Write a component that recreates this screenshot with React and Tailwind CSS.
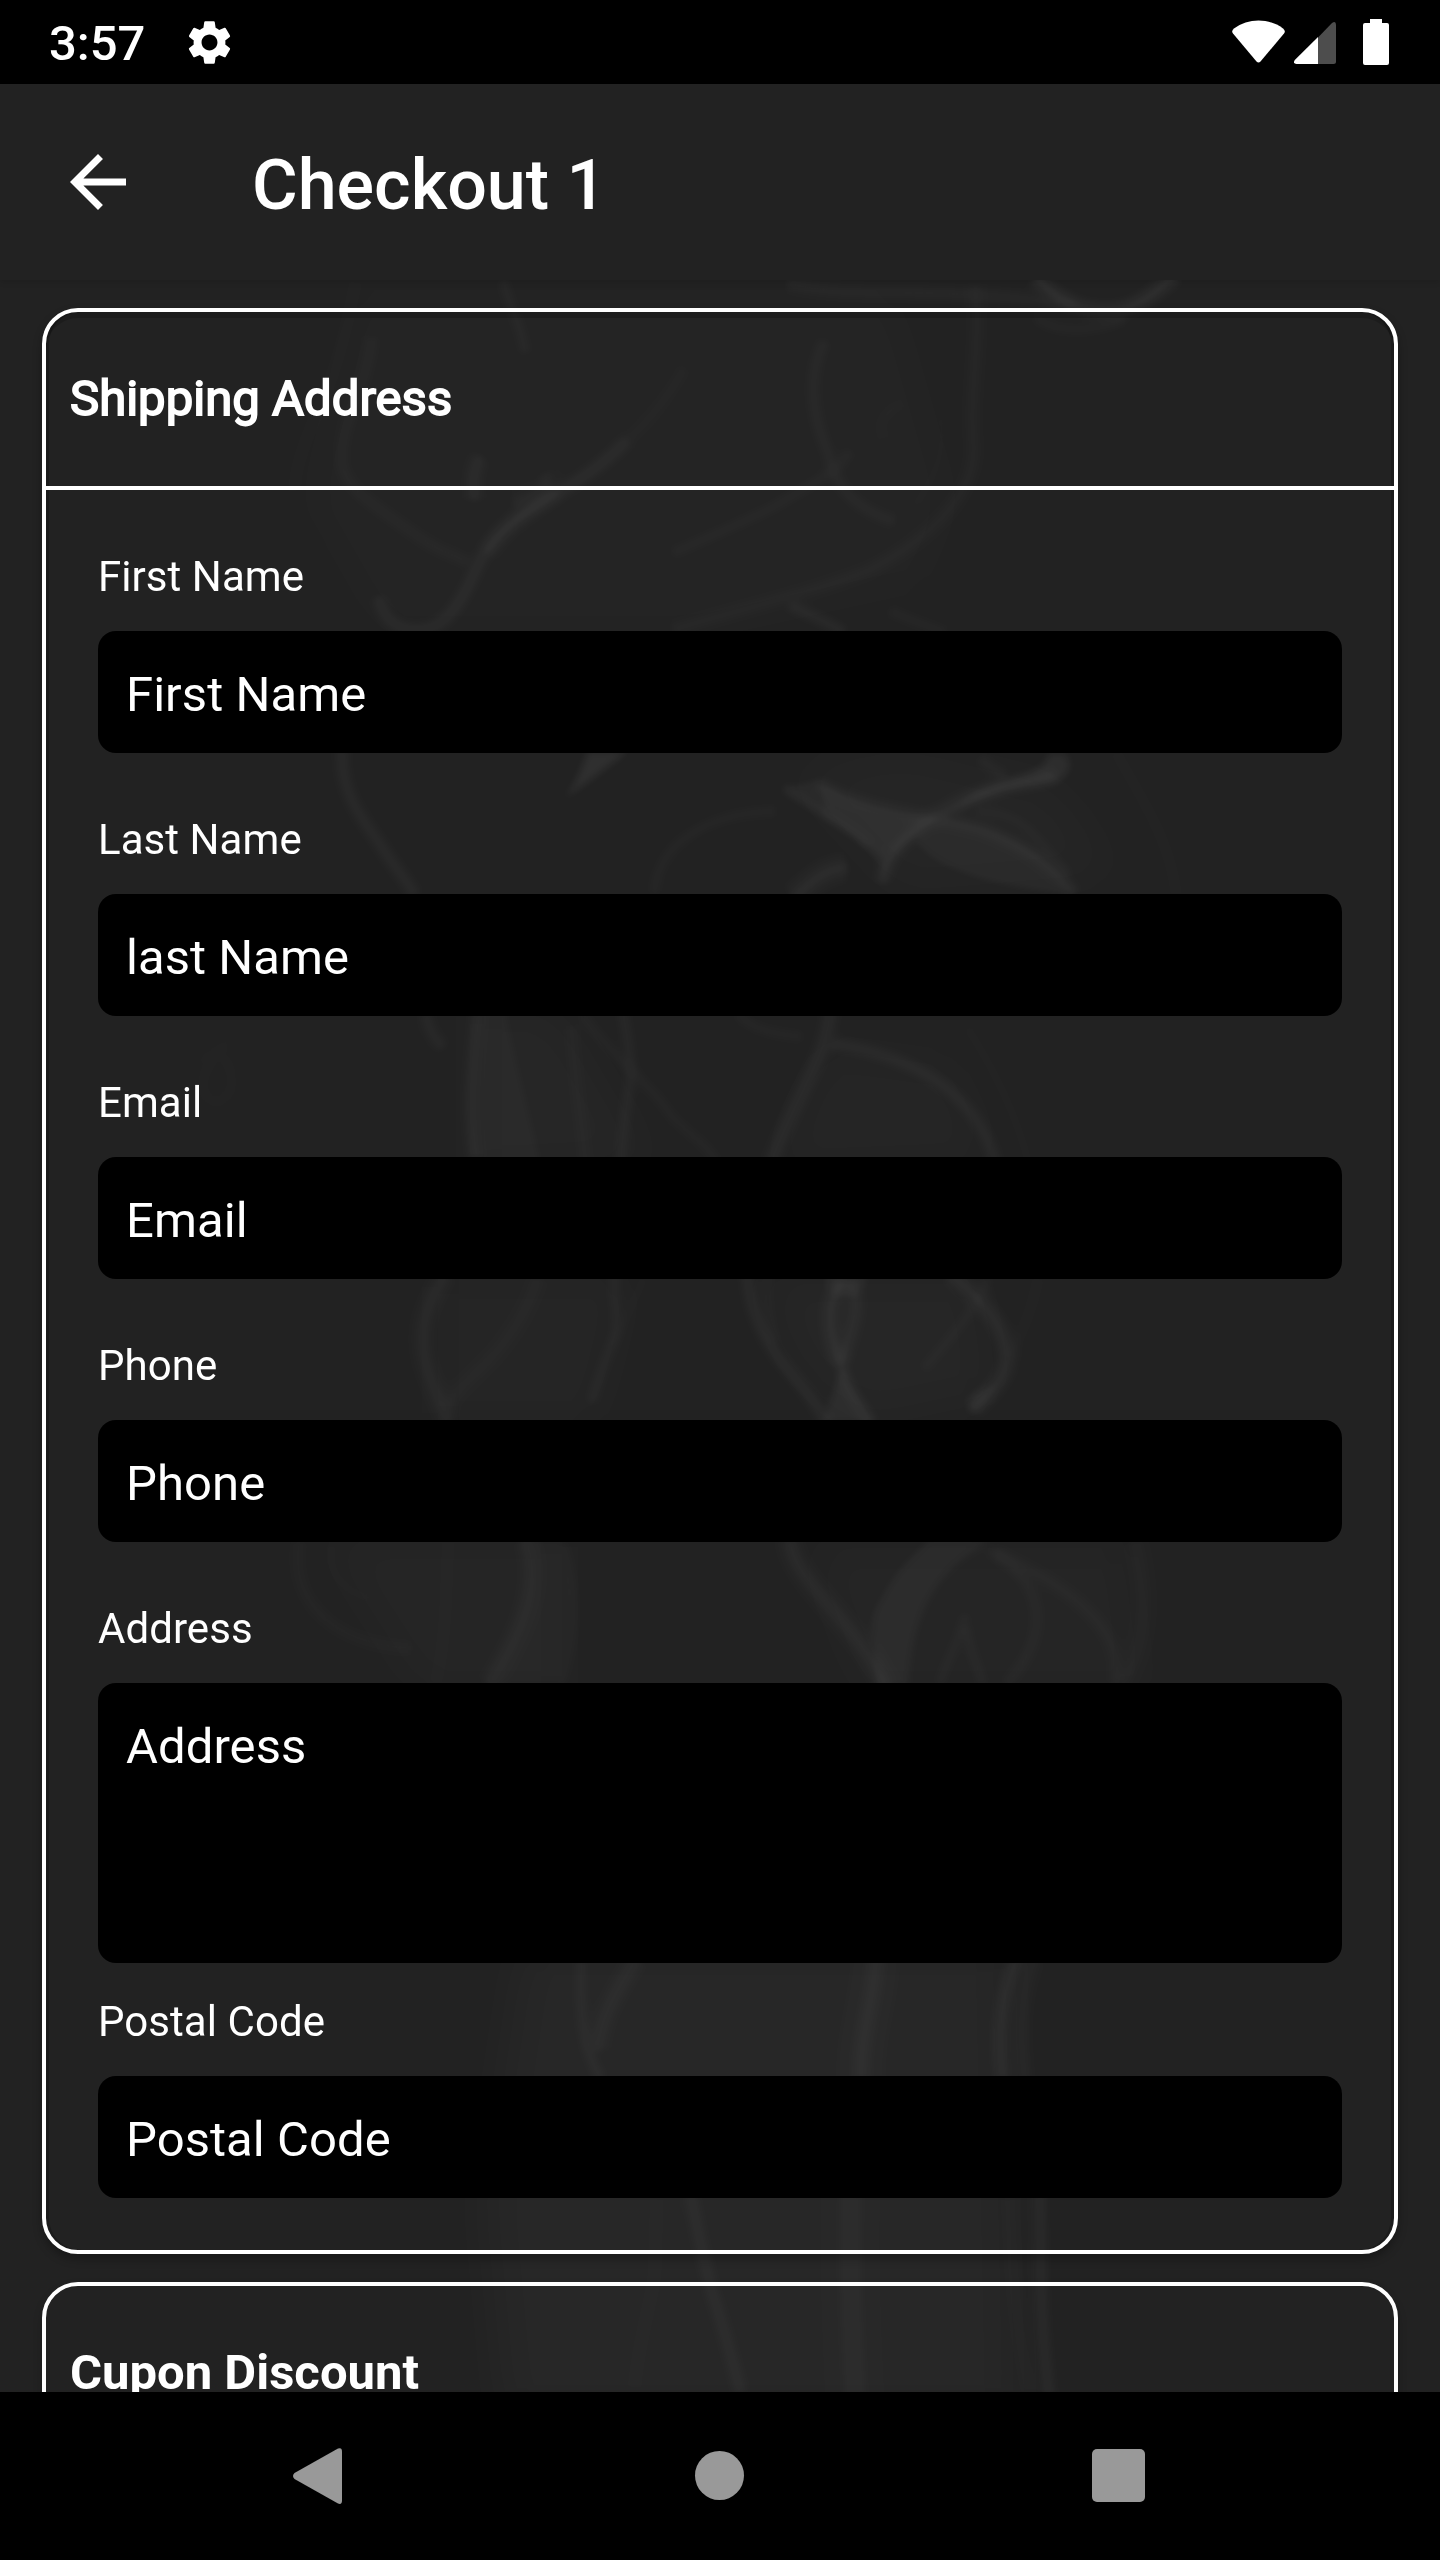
import React from "react";
import { MdSettings, MdArrowBack } from "react-icons/md";

const fields = [
  { label: "First Name", placeholder: "First Name" },
  { label: "Last Name", placeholder: "last Name" },
  { label: "Email", placeholder: "Email" },
  { label: "Phone", placeholder: "Phone" },
  { label: "Address", placeholder: "Address", multiline: true },
  { label: "Postal Code", placeholder: "Postal Code", tight: true },
];

// A strand of smoke: a thin core inside a wider, fainter glow.
function Wisp({ d, w = 5, o = 0.04 }) {
  return (
    <g fill="none" stroke="#fff">
      <path d={d} strokeWidth={w * 3.6} strokeOpacity={o * 0.28} vectorEffect="non-scaling-stroke" />
      <path d={d} strokeWidth={w * 1.1} strokeOpacity={o * 0.75} vectorEffect="non-scaling-stroke" />
    </g>
  );
}

function Haze({ d, o = 0.02 }) {
  return <path d={d} fill="#fff" fillOpacity={o} />;
}

function Smoke() {
  return (
    <svg className="pointer-events-none absolute inset-0 h-full w-full" viewBox="0 280 1440 2112" aria-hidden="true">
      <defs>
        <filter id="soft" filterUnits="userSpaceOnUse" x="0" y="200" width="1440" height="2300" colorInterpolationFilters="sRGB">
          <feGaussianBlur stdDeviation="3.5" />
        </filter>
        <filter id="wide" filterUnits="userSpaceOnUse" x="0" y="200" width="1440" height="2300" colorInterpolationFilters="sRGB">
          <feGaussianBlur stdDeviation="26" />
        </filter>
      </defs>

      <g filter="url(#wide)">
        <Haze d="M350 290 L900 290 L960 500 L930 590 L700 640 L380 640 L300 500 Z" o={0.012} />
        <Haze d="M780 770 L900 740 L1060 780 L1130 880 L900 900 Z" o={0.014} />
        <Haze d="M470 1000 L560 1000 L660 1170 L470 1180 Z" o={0.018} />
        <Haze d="M820 1040 L960 1060 L1000 1170 L760 1180 Z" o={0.016} />
        <Haze d="M430 1270 L640 1270 L600 1430 L430 1430 Z" o={0.016} />
        <Haze d="M750 1270 L980 1270 L1000 1400 L860 1430 L790 1370 Z" o={0.018} />
        <Haze d="M310 1530 L570 1530 L570 1700 L420 1700 Z" o={0.014} />
        <Haze d="M800 1540 L1130 1540 L1150 1700 L860 1700 Z" o={0.016} />
        <Haze d="M520 1940 L1010 1940 L1020 2420 L500 2420 L480 2200 Z" o={0.022} />
      </g>

      <g filter="url(#soft)">
        <g transform="translate(200 260) scale(0.6378 0.3333)">
          <Wisp d="M245 60 C230 200 215 320 190 430 C165 540 145 640 150 700" w={12} o={0.01} />
          <Wisp d="M270 230 C260 400 220 480 222 600 C225 680 260 720 350 840 C380 880 410 890 420 910" w={6} o={0.026} />
          <Wisp d="M475 60 C485 140 505 200 510 280" w={5} o={0.03} />
          <Wisp d="M440 590 C425 640 430 670 430 720" w={7} o={0.04} />
          <Wisp d="M760 320 C740 400 700 490 670 540" w={10} o={0.014} />
          <Wisp d="M670 540 C620 640 560 700 510 760 C450 830 440 900 420 980 C400 1050 380 1110 340 1110 C300 1110 285 1060 280 1010" w={6} o={0.046} />
          <Wisp d="M560 690 C500 770 470 820 450 880" w={8} o={0.035} />
          <Wisp d="M540 640 C550 680 530 710 490 730" w={10} o={0.024} />
          <Wisp d="M980 240 C955 330 955 450 985 580 C995 680 1030 750 1090 785" w={6} o={0.03} />
          <Wisp d="M1020 570 C1000 640 960 670 900 740 C860 780 800 830 740 880" w={5} o={0.026} />
          <Wisp d="M1215 80 C1225 250 1205 400 1213 560 C1215 700 1150 830 1050 930 C960 1000 860 1040 740 1110" w={7} o={0.028} />
          <Wisp d="M1105 430 C1070 450 1060 500 1075 540" w={7} o={0.014} />
          <Wisp d="M1160 470 C1170 560 1155 650 1120 740" w={6} o={0.012} />
          <Wisp d="M920 70 C1000 110 1100 90 1210 105 C1290 115 1330 125 1370 140" w={7} o={0.032} />
          <Wisp d="M1310 50 C1350 140 1400 160 1440 150 C1480 135 1500 90 1530 45" w={6} o={0.07} />
          <Wisp d="M1310 170 C1340 220 1400 220 1450 175" w={5} o={0.024} />
          <Wisp d="M925 1035 C960 1070 990 1090 1010 1120" w={5} o={0.04} />
          <Wisp d="M1080 1050 C1110 1080 1140 1095 1170 1120" w={5} o={0.024} />
        </g>

        <g transform="translate(200 740) scale(0.6631 0.4464)">
          <Wisp d="M215 20 C210 110 240 170 270 230 C290 280 310 310 325 350" w={6} o={0.042} />
          <Haze d="M585 25 L645 25 C610 65 590 90 550 130 C570 90 575 60 585 25 Z" o={0.06} />
          <Wisp d="M870 160 C780 160 690 220 685 345" w={5} o={0.026} />
          <Haze d="M880 110 C930 160 1000 220 1025 275 C1030 290 1025 310 1030 325 C1035 290 1050 240 1080 215 C1085 270 1180 330 1320 345 C1290 270 1220 190 1110 175 C1030 165 970 130 930 90 Z" o={0.03} />
          <Haze d="M940 100 C970 140 1040 165 1110 175 L1040 260 L1020 260 C1000 215 960 190 940 175 Z" o={0.025} />
          <Wisp d="M880 105 C920 150 980 190 1010 235" w={5} o={0.034} />
          <Wisp d="M930 95 C1000 160 1100 165 1180 200 C1250 240 1290 290 1320 345" w={6} o={0.036} />
          <Wisp d="M1030 320 C1030 250 1090 180 1150 135 C1200 100 1260 100 1290 75" w={7} o={0.044} />
          <Haze d="M1150 140 C1190 80 1270 95 1280 30 L1305 30 C1320 60 1310 100 1260 100 C1210 105 1180 130 1110 180 Z" o={0.05} />
          <Wisp d="M1170 160 C1250 160 1260 230 1310 300" w={5} o={0.024} />
          <Wisp d="M1175 40 C1190 60 1200 70 1215 80" w={6} o={0.03} />
          <Wisp d="M1380 25 C1420 130 1465 230 1472 350" w={7} o={0.014} />
          <Wisp d="M975 285 C940 290 920 320 895 355" w={9} o={0.05} />
          <Wisp d="M40 690 C-10 740 0 820 30 810 C55 790 50 740 35 710" w={6} o={0.016} />
          <Wisp d="M-20 780 C-10 680 80 640 190 650" w={5} o={0.012} />
          <Wisp d="M340 610 C345 655 355 670 368 690" w={7} o={0.035} />
          <Wisp d="M418 610 C415 700 400 800 415 940" w={6} o={0.044} />
          <Haze d="M418 600 L460 600 C480 740 500 850 515 950 L415 950 C400 800 415 700 418 600 Z" o={0.018} />
          <Wisp d="M560 640 C565 750 575 850 582 950" w={6} o={0.022} />
          <Wisp d="M637 600 C645 680 655 740 645 800 C640 860 635 900 635 950" w={6} o={0.034} />
          <Wisp d="M575 610 C620 710 680 770 710 840 C740 890 770 910 780 950" w={5} o={0.024} />
          <Wisp d="M810 610 C830 650 870 660 910 665" w={5} o={0.025} />
          <Wisp d="M950 600 C950 700 900 790 860 950" w={7} o={0.048} />
          <Wisp d="M950 680 C1050 700 1170 770 1200 950" w={6} o={0.042} />
          <Wisp d="M1155 640 C1190 720 1230 830 1250 950" w={8} o={0.012} />
        </g>

        <g transform="translate(200 1260) scale(0.6631 0.3333)">
          <Wisp d="M370 40 C350 110 320 200 345 340 C355 400 365 440 375 490" w={8} o={0.036} />
          <Wisp d="M510 50 C490 180 450 280 410 350 C390 390 375 420 370 450" w={8} o={0.022} />
          <Wisp d="M625 40 C620 120 640 180 620 260 C605 330 600 360 590 430" w={6} o={0.03} />
          <Wisp d="M670 50 C655 130 635 200 620 260" w={5} o={0.018} />
          <Wisp d="M825 40 C830 160 850 230 875 300 C905 370 930 430 945 490" w={6} o={0.046} />
          <Wisp d="M858 40 C850 120 860 180 865 250" w={5} o={0.022} />
          <Wisp d="M970 60 C940 130 950 230 965 310" w={7} o={0.055} />
          <Wisp d="M980 60 C1000 130 980 220 968 300" w={7} o={0.045} />
          <Haze d="M940 40 L1010 40 L990 110 L955 110 Z" o={0.03} />
          <Wisp d="M967 300 C970 370 990 420 1014 490" w={5} o={0.05} />
          <Haze d="M967 320 C960 380 945 440 940 490 L1014 490 C990 420 975 370 967 320 Z" o={0.045} />
          <Wisp d="M1130 40 C1180 120 1215 200 1218 290 C1215 360 1190 400 1165 450" w={7} o={0.052} />
          <Haze d="M1200 370 C1180 390 1150 400 1160 460 L1185 430 Z" o={0.035} />
          <Wisp d="M1190 50 C1170 150 1130 240 1090 330" w={5} o={0.024} />
          <Wisp d="M1265 50 C1255 140 1245 200 1220 290" w={7} o={0.014} />
          <Wisp d="M150 840 C135 990 180 1150 320 1165" w={10} o={0.02} />
          <Wisp d="M200 850 C190 930 210 990 260 1020" w={8} o={0.01} />
          <Wisp d="M375 840 C370 960 375 1100 355 1275" w={8} o={0.018} />
          <Wisp d="M490 835 C515 960 490 1100 435 1275" w={8} o={0.04} />
          <Haze d="M500 840 C520 960 490 1100 440 1275 L545 1275 C570 1100 570 970 545 840 Z" o={0.014} />
          <Wisp d="M550 850 C570 1000 570 1130 545 1275" w={6} o={0.02} />
          <Wisp d="M890 835 C890 960 990 1080 1035 1285" w={9} o={0.046} />
          <Haze d="M1190 840 C1110 920 1070 1050 1065 1280 L1020 1280 C1020 1150 1000 1090 1030 1010 C1050 930 1080 880 1100 840 Z" o={0.034} />
          <Wisp d="M1190 850 C1110 920 1070 1050 1065 1275" w={7} o={0.016} />
          <Wisp d="M1190 870 C1270 960 1290 1110 1215 1275" w={6} o={0.024} />
          <Wisp d="M1200 880 C1290 960 1400 1090 1380 1275" w={7} o={0.024} />
          <Wisp d="M1410 840 C1430 1000 1430 1150 1390 1275" w={9} o={0.022} />
          <Wisp d="M1155 1060 C1145 1150 1125 1200 1115 1275" w={5} o={0.028} />
          <Wisp d="M1155 1100 C1160 1180 1175 1220 1180 1275" w={5} o={0.032} />
        </g>

        <g transform="translate(500 1940) scale(0.4082 0.3333)">
          <Wisp d="M200 60 C195 200 200 330 250 420" w={6} o={0.034} />
          <Wisp d="M335 55 C280 160 245 240 238 330" w={8} o={0.036} />
          <Wisp d="M920 50 C920 170 880 280 885 420" w={14} o={0.04} />
          <Wisp d="M1270 50 C1230 150 1215 270 1232 420" w={6} o={0.05} />
          <Wisp d="M1312 50 C1280 140 1270 250 1285 420" w={8} o={0.024} />
          <Wisp d="M467 760 C480 850 500 960 520 1060 C545 1150 565 1240 590 1360" w={6} o={0.036} />
          <Wisp d="M385 770 L380 1000 C370 1100 340 1200 330 1350" w={14} o={0.01} />
          <Wisp d="M860 760 C855 950 860 1130 870 1370" w={18} o={0.03} />
          <Wisp d="M1322 760 C1325 950 1320 1130 1345 1370" w={6} o={0.045} />
          <Wisp d="M1250 770 C1255 950 1260 1130 1300 1360" w={14} o={0.014} />
        </g>
      </g>
    </svg>
  );
}

function StatusBar() {
  return (
    <header className="flex h-[84px] shrink-0 items-center bg-black pl-[49px] pr-[51px]">
      <span className="pt-[4px] text-[49px] font-medium leading-[58px]">3:57</span>
      <MdSettings className="ml-[38px] size-[53px]" />
      <svg className="ml-auto h-[44px] w-[53px]" viewBox="0 0 53 44">
        <path d="M2 8.500 C16 -2.200 37 -2.200 51 8.500 Q54 11 52 13.500 L28.500 41.500 Q26.500 43.500 24.500 41.500 L1 13.500 Q-1 11 2 8.500 Z" fill="#fff" />
      </svg>
      <svg className="ml-[9px] mt-[2px] h-[42px] w-[42px]" viewBox="0 0 42 42">
        <path d="M24 15.500 L38 1 Q42 -1.500 42 3 V39.500 Q42 42 39.500 42 H24 Z" fill="#4d4d4d" />
        <path d="M24 15 V42 H2.500 Q-1.500 41.500 0.800 38 Z" fill="#fff" />
      </svg>
      <svg className="ml-[27px] h-[46px] w-[26px]" viewBox="0 0 26 46">
        <path d="M7 0 H19 V4 H24 Q26 4 26 6 V44 Q26 46 24 46 H2 Q0 46 0 44 V6 Q0 4 2 4 H7 Z" fill="#fff" />
      </svg>
    </header>
  );
}

function AppBar() {
  return (
    <div className="z-10 flex h-[196px] shrink-0 items-center bg-[#222222] pl-[56px] shadow-[0_2px_6px_rgba(0,0,0,0.12)]">
      <MdArrowBack className="size-[84px]" />
      <h1 className="ml-[112px] pt-[5px] text-[70px] font-medium leading-[84px]">Checkout 1</h1>
    </div>
  );
}

function Field({ label, placeholder, multiline, tight }) {
  return (
    <div className={tight ? "pt-[34px]" : "pt-[62px]"}>
      <div className="mb-[30px] text-[42px] leading-[49px] tracking-[0.06px]">{label}</div>
      <div className={(multiline ? "h-[280px]" : "h-[122px]") + " rounded-[18px] bg-black px-[28px] pt-[35px] text-[49px] leading-[57px] tracking-[0.06px]"}>
        {placeholder}
      </div>
    </div>
  );
}

export default function App() {
  return (
    <div className="flex h-[2560px] w-[1440px] flex-col overflow-hidden bg-black font-['Roboto',sans-serif] text-white">
      <StatusBar />
      <AppBar />
      <main className="relative h-[2112px] shrink-0 overflow-hidden bg-[#222222]">
        <Smoke />
        <div className="relative flex flex-col gap-[28px] px-[42px] pt-[28px]">
          <section className="rounded-[36px] border-4 border-white shadow-[0_5px_10px_rgba(0,0,0,0.3),inset_3px_0_0_rgba(0,0,0,0.2),inset_-3px_0_0_rgba(0,0,0,0.2),inset_0_6px_0_rgba(0,0,0,0.17)]">
            <div className="flex h-[178px] items-center border-b-4 border-white px-[24px]">
              <h2 className="text-[49px] font-normal leading-[58px] tracking-[0.04px] [-webkit-text-stroke:1.8px_white]">Shipping Address</h2>
            </div>
            <div className="px-[52px] pb-[52px]">
              {fields.map((f) => (
                <Field key={f.label} {...f} />
              ))}
            </div>
          </section>
          <section className="h-[400px] rounded-[36px] border-4 border-white shadow-[0_5px_10px_rgba(0,0,0,0.2)]">
            <div className="flex h-[178px] items-center border-b-4 border-white px-[24px]">
              <h2 className="text-[49px] font-bold leading-[58px]">Cupon Discount</h2>
            </div>
          </section>
        </div>
      </main>
      <nav className="flex h-[168px] shrink-0 items-center bg-black pl-[292px]">
        <svg className="h-[58px] w-[50px]" viewBox="0 0 50 58">
          <path d="M46 1.500 Q50 0 50 4.500 V53.500 Q50 58 46 56.500 L2.500 32 Q-0.500 29 2.500 26 Z" fill="#999" />
        </svg>
        <div className="mb-px ml-[353px] size-[49px] rounded-full bg-[#999999]" />
        <div className="mb-px ml-[348px] size-[53px] rounded-[5px] bg-[#999999]" />
      </nav>
    </div>
  );
}
